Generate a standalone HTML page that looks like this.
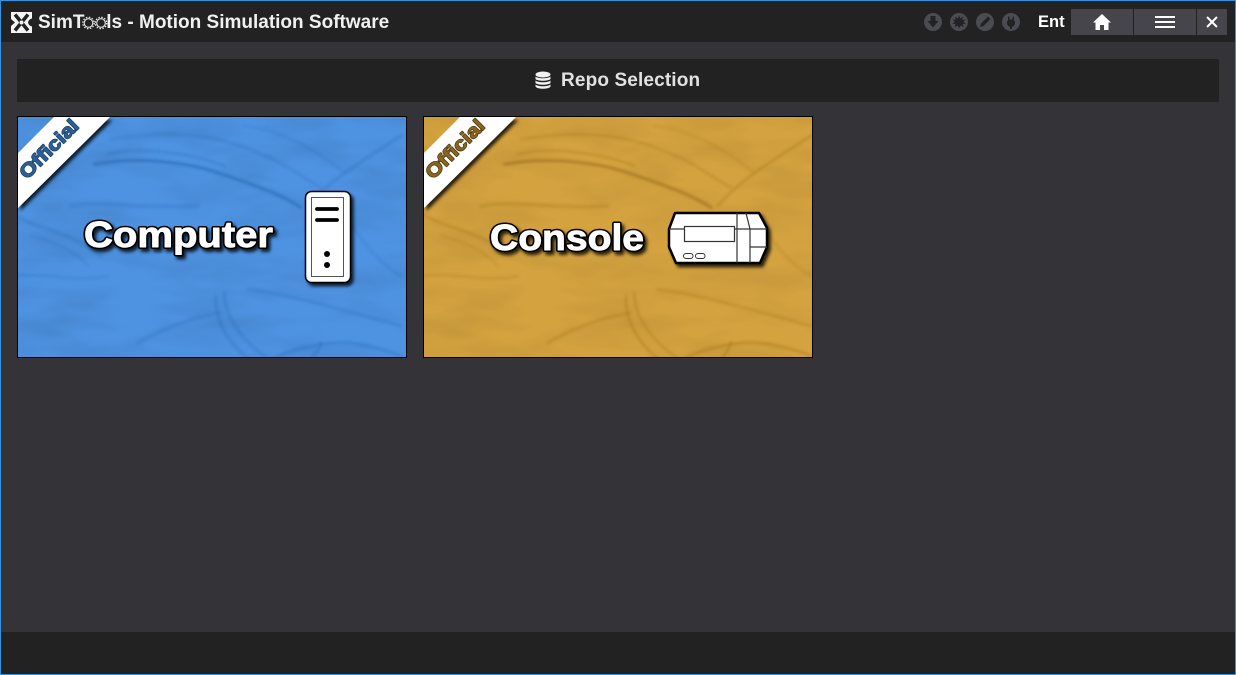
<!DOCTYPE html>
<html><head><meta charset="utf-8"><title>SimTools</title>
<style>
html,body{margin:0;padding:0;width:1236px;height:675px;overflow:hidden;background:#343338;font-family:"Liberation Sans",sans-serif}
.a{position:absolute}
#frame{position:absolute;left:0;top:0;width:1234px;height:673px;border:1px solid #2f93e6;z-index:9}
#top{left:1px;top:1px;width:1234px;height:41px;background:#222}
#foot{left:1px;top:632px;width:1234px;height:42px;background:#222}
#title{left:38px;top:11px;font-size:19px;line-height:24px;font-weight:bold;color:#f0f0f0;white-space:nowrap}
#title i{font-style:normal;color:transparent}
#bar{left:17px;top:59px;width:1202px;height:43px;background:#222}
#rs{left:561px;top:69px;font-size:19px;line-height:23px;font-weight:bold;color:#e2e2e2;white-space:nowrap;letter-spacing:.14px}
#ent{left:1038px;top:13px;font-size:16.500px;line-height:19px;font-weight:bold;color:#fff}
.b{top:9px;height:26px;background:#45454b}
</style></head><body>
<div id="frame"></div>
<div class="a" id="top"></div>
<div class="a" id="foot"></div>
<svg class="a" style="left:11px;top:12px" width="21" height="21" viewBox="0 0 21 21">
<rect width="21" height="21" fill="#f4f4f4"/>
<path d="M4 2.500l13 16M17 2.500l-13 16" fill="none" stroke="#222" stroke-width="3.500"/>
<path d="M0 7l4 3.500L0 14zM21 6.500a5 5 0 0 0-4 4 5 5 0 0 0 4 4z" fill="#222"/>
<circle cx="10.500" cy="10.500" r="2" fill="#f4f4f4"/>
</svg>
<div class="a" id="title">SimT<i>oo</i>ls - Motion Simulation Software</div>
<svg class="a" style="left:80px;top:14px" width="30" height="18" viewBox="0 0 30 18" fill="none" stroke="#e8e8e8">
<circle cx="8.500" cy="9" r="4.300" stroke-width="1.100"/><circle cx="8.500" cy="9" r="5.700" stroke-width="1.300" stroke-dasharray="1.500 1.500"/>
<circle cx="21" cy="9" r="4.300" stroke-width="1.100"/><circle cx="21" cy="9" r="5.700" stroke-width="1.300" stroke-dasharray="1.500 1.500"/>
</svg>

<svg class="a" style="left:923px;top:12px" width="100" height="20" viewBox="0 0 100 20">
<g fill="#4b4b52"><circle cx="10" cy="10" r="9"/><circle cx="36" cy="10" r="9"/><circle cx="62" cy="10" r="9"/><circle cx="88" cy="10" r="9"/></g>
<g fill="#222">
<path d="M7.500 4h5v5h3L10 15.500 4.500 9h3z"/>
<path d="M36 3.500l1.300 3 2.700-2-.7 3.300 3.400-.3-2.500 2.300 2.800 1.800-3.400.4 1 3.200-3-1.700L36 16.500l-1.400-3-3 1.700 1-3.200-3.400-.4 2.800-1.800-2.500-2.300 3.400.3-.7-3.300 2.700 2z"/>
<path d="M65 4.500l2.500 2.500-7 7-3.500 1 1-3.500z"/>
<path d="M85 4.500h1.500v3h3v-3H91V9h1v2.500a4 4 0 0 1-3 3.300V17h-2v-2.200a4 4 0 0 1-3-3.300V9h1z"/>
</g></svg>
<div class="a" id="ent">Ent</div>
<div class="a b" style="left:1071px;width:62px"></div>
<div class="a b" style="left:1134px;width:62px"></div>
<div class="a b" style="left:1197px;width:30px"></div>
<svg class="a" style="left:1071px;top:9px" width="156" height="26" viewBox="0 0 156 26">
<path d="M31 5L22 13.500h2.500V21h4.500v-5h4v5h4.500v-7.500H40z" fill="#fff"/>
<path d="M84 8h20M84 13h20M84 18h20" stroke="#fff" stroke-width="2" fill="none"/>
<path d="M136 8l10 10M146 8l-10 10" stroke="#fff" stroke-width="2" fill="none"/>
</svg>

<div class="a" id="bar"></div>
<svg class="a" style="left:535px;top:71px" width="16" height="19" viewBox="0 0 16 19">
<ellipse cx="8" cy="3.500" rx="7.500" ry="3" fill="#f2f2f2"/>
<path d="M.5 5.500C2 7.800 14 7.800 15.500 5.500V8C14 10.300 2 10.300 .5 8zM.5 9.500C2 11.800 14 11.800 15.500 9.500V12C14 14.300 2 14.300 .5 12zM.5 13.500C2 15.800 14 15.800 15.500 13.500V15.500C14 18.500 2 18.500 .5 15.500z" fill="#f2f2f2"/>
</svg>
<div class="a" id="rs">Repo Selection</div>

<svg class="a" style="left:0;top:0" width="1236" height="675" viewBox="0 0 1236 675">
<defs>
<filter id="bl" x="-10%" y="-10%" width="120%" height="120%"><feGaussianBlur stdDeviation="4"/></filter>
<filter id="mot" x="0" y="0" width="100%" height="100%">
<feTurbulence type="fractalNoise" baseFrequency=".012 .035" numOctaves="3" seed="7"/>
<feColorMatrix type="matrix" values="0 0 0 0 0  0 0 0 0 0  0 0 0 0 0  1.100 0 0 0 -.42"/>
</filter>
<filter id="sh" x="-20%" y="-20%" width="150%" height="150%"><feDropShadow dx="2.500" dy="3" stdDeviation="1.500" flood-color="#000" flood-opacity=".8"/></filter>
<g id="tex" fill="none" stroke-linecap="round">
<g transform="scale(.3333)" filter="url(#bl)">
<path d="M250 145C350 125 500 130 620 170S820 240 870 275" stroke-width="9" opacity=".5"/>
<path d="M290 115C380 90 540 110 640 150" stroke-width="7" opacity=".25"/>
<path d="M300 70C430 50 560 45 690 90S850 170 930 215" stroke-width="7" opacity=".22"/>
<path d="M890 270C940 210 1010 160 1170 60" stroke-width="7" opacity=".28"/>
<path d="M700 30C800 40 900 90 1000 170" stroke-width="6" opacity=".16"/>
<path d="M0 290C70 340 170 340 270 420" stroke-width="8" opacity=".25"/>
<path d="M180 270C280 250 380 280 560 270" stroke-width="12" opacity=".2"/>
<path d="M0 480C110 470 200 500 290 480" stroke-width="8" opacity=".16"/>
<path d="M380 680C470 630 560 600 630 590" stroke-width="8" opacity=".25"/>
<path d="M615 540C610 620 660 690 720 735" stroke-width="6" opacity=".32"/>
<path d="M640 530C640 610 700 680 780 735" stroke-width="6" opacity=".28"/>
<path d="M710 520C800 530 920 560 1170 630" stroke-width="7" opacity=".25"/>
<path d="M780 735C830 700 930 680 990 680S1120 700 1170 720" stroke-width="8" opacity=".3"/>
<path d="M930 680C920 710 905 720 900 735" stroke-width="7" opacity=".32"/>
<path d="M1000 300C1060 380 1100 440 1170 480" stroke-width="7" opacity=".15"/>
<path d="M60 360C110 370 190 400 230 450" stroke-width="6" opacity=".16"/>
</g></g>
<clipPath id="c1"><rect x="0" y="0" width="388" height="240"/></clipPath>
<g id="band">
<polygon points="36,0 92,0 0,91 0,36" fill="#fff" filter="url(#sh)"/>
</g>
</defs>

<!-- Computer card -->
<rect x="17.500" y="116.500" width="389" height="241" fill="#000" stroke="#000"/>
<g transform="translate(18,117)" clip-path="url(#c1)">
<rect width="388" height="240" fill="#4e93e2"/>
<rect width="388" height="240" filter="url(#mot)" opacity=".16"/>
<use href="#tex" stroke="#1f5fa8" transform="translate(-7 -1)"/>
<use href="#band"/>
<text transform="translate(9,63) rotate(-45)" font-family="Liberation Sans" font-weight="bold" font-size="19" textLength="75" lengthAdjust="spacingAndGlyphs" fill="#2a6096" stroke="#1d3f66" stroke-width="1.400" stroke-linejoin="round" paint-order="stroke">Official</text>
<g filter="url(#sh)">
<text x="66" y="130" font-family="Liberation Sans" font-weight="bold" font-size="36" textLength="189" lengthAdjust="spacingAndGlyphs" fill="#fff" stroke="#000" stroke-width="4" stroke-linejoin="round">Computer</text>
<text x="66" y="130" font-family="Liberation Sans" font-weight="bold" font-size="36" textLength="189" lengthAdjust="spacingAndGlyphs" fill="#fff" stroke="#fff" stroke-width=".9" stroke-linejoin="round">Computer</text>
<rect x="287.500" y="74.500" width="45" height="91" rx="6" fill="#fff" stroke="#000" stroke-width="1.500"/>
</g>
<rect x="293.500" y="80.500" width="32" height="79" fill="none" stroke="#555" stroke-width="1"/>
<path d="M299 92h20M299 103h20" stroke="#000" stroke-width="3.800" stroke-linecap="round" fill="none"/>
<circle cx="309" cy="137" r="3" fill="#000"/><circle cx="309" cy="148" r="3" fill="#000"/>
</g>

<!-- Console card -->
<rect x="423.500" y="116.500" width="389" height="241" fill="#000" stroke="#000"/>
<g transform="translate(424,117)" clip-path="url(#c1)">
<rect width="388" height="240" fill="#d4a23f"/>
<rect width="388" height="240" filter="url(#mot)" opacity=".13"/>
<use href="#tex" stroke="#8f6410" transform="translate(-3 -1)"/>
<use href="#band"/>
<text transform="translate(9,63) rotate(-45)" font-family="Liberation Sans" font-weight="bold" font-size="19" textLength="75" lengthAdjust="spacingAndGlyphs" fill="#8a6420" stroke="#4f3a10" stroke-width="1.400" stroke-linejoin="round" paint-order="stroke">Official</text>
<g filter="url(#sh)">
<text x="66" y="133" font-family="Liberation Sans" font-weight="bold" font-size="36" textLength="154" lengthAdjust="spacingAndGlyphs" fill="#fff" stroke="#000" stroke-width="4" stroke-linejoin="round">Console</text>
<text x="66" y="133" font-family="Liberation Sans" font-weight="bold" font-size="36" textLength="154" lengthAdjust="spacingAndGlyphs" fill="#fff" stroke="#fff" stroke-width=".9" stroke-linejoin="round">Console</text>
<path d="M251 96H335L343 111V130L336 146H252L245 130V112Z" fill="#fff" stroke="#000" stroke-width="2.500" stroke-linejoin="round"/>
</g>
<path d="M245 112H260M310 112H343M313 96V146M322 96L326 112V146M326 130H343" fill="none" stroke="#333" stroke-width="1.200"/>
<rect x="260.500" y="109.500" width="50" height="15" fill="#fff" stroke="#333" stroke-width="1.200"/>
<rect x="259.500" y="136.500" width="9.500" height="5" rx="2.500" fill="none" stroke="#333"/>
<rect x="271.500" y="136.500" width="9.500" height="5" rx="2.500" fill="none" stroke="#333"/>
</g>
</svg>
</body></html>
